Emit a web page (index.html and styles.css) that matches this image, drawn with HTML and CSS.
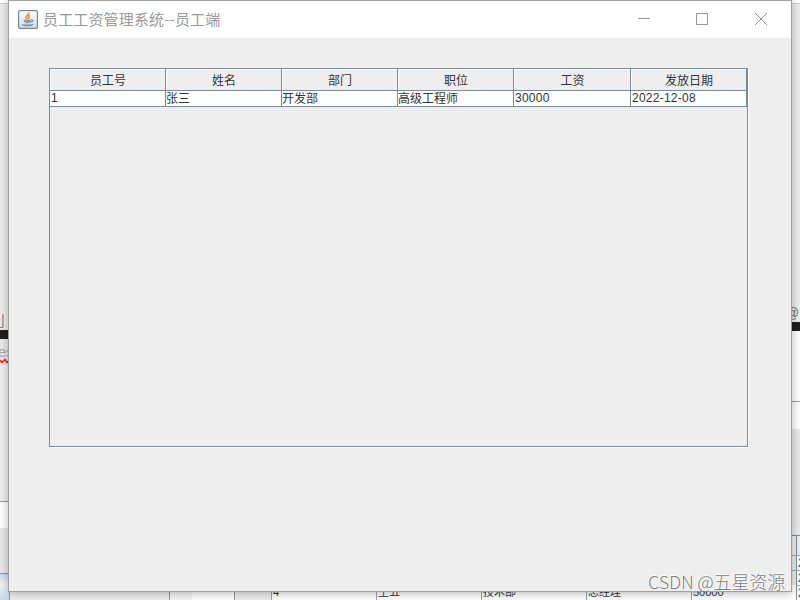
FILE: index.html
```
<!DOCTYPE html>
<html lang="zh-CN">
<head>
  <meta charset="utf-8">
  <title>员工工资管理系统--员工端</title>
  <link rel="stylesheet" href="styles.css">
</head>
<body>
  <div class="desktop">
    <!-- windows lying behind the main one -->
    <div class="behind-left">
      <div class="b-top"></div>
      <div class="l-panel"><span class="l-letter">刂</span></div>
      <div class="b-dark"></div>
      <div class="l-editor"><span class="l-word">es</span>
        <svg class="squiggle" width="9" height="6" viewBox="0 0 9 6"><path d="M0 2L2 4.500L5 1.500L7 4.500L9 3" fill="none" stroke="#ff2020" stroke-width="1.600"/></svg>
      </div>
      <div class="l-white"></div>
      <div class="l-gray"></div>
      <div class="l-task"></div>
    </div>
    <div class="behind-right">
      <div class="b-top"></div>
      <div class="r-panel"><span class="r-at">@</span></div>
      <div class="b-dark"></div>
      <div class="r-white"></div>
      <div class="r-white2"></div>
      <div class="r-gray"></div>
      <div class="r-head"></div>
      <div class="r-cell">2</div>
      <div class="r-cell">2</div>
      <div class="r-cell last">2</div>
    </div>
    <div class="behind-bottom">
      <div class="s1"></div>
      <div class="s2"></div>
      <div class="s3"></div>
      <div class="s4"></div>
      <div class="cell"><span>4</span></div>
      <div class="cell"><span>王五</span></div>
      <div class="cell"><span>技术部</span></div>
      <div class="cell"><span>总经理</span></div>
      <div class="cell"><span>50000</span></div>
    </div>

    <div class="window">
      <div class="titlebar">
        <svg class="java" width="20" height="19" viewBox="0 0 20 19">
          <defs>
            <linearGradient id="tile" x1="0" y1="0" x2="0" y2="1">
              <stop offset="0" stop-color="#ffffff"/>
              <stop offset="1" stop-color="#d3dbe2"/>
            </linearGradient>
          </defs>
          <rect x=".6" y=".6" width="18.8" height="17.8" rx="1.5" fill="url(#tile)" stroke="#71899b" stroke-width="1.2"/>
          <path d="M10.8 2.6C11.5 5 7.6 5.700 8 7.400C8.200 8.300 9 8.600 9.200 9.300M12 5.200C9.500 6.200 11.700 7.200 10.400 9" fill="none" stroke="#ea8f45" stroke-width="1.700"/>
          <path d="M5.500 9.800H13C13 12 12 13.100 9.500 13.100C7 13.100 6 12 5.500 9.800Z" fill="#8199aa"/>
          <path d="M13 9.800C15.800 9.300 15.300 11.900 12.400 12.200M4 14.400C6 16.300 13 16.200 15 14.300" fill="none" stroke="#6f8ba0" stroke-width="1.200"/>
          <path d="M6 14.200H12.500" stroke="#8ca1b0"/>
        </svg>
        <span class="title">员工工资管理系统--员工端</span>
        <div class="controls">
          <svg width="12" height="12"><path d="M0 5.500H12" stroke="#999"/></svg>
          <svg width="12" height="12"><rect x=".5" y=".5" width="11" height="11" fill="none" stroke="#999"/></svg>
          <svg class="close" width="12" height="12"><path d="M0 0L12 12M12 0L0 12" stroke="#8d8d8d"/></svg>
        </div>
      </div>

      <div class="content">
        <div class="scroll">
          <div class="row head">
            <div>员工号</div>
            <div>姓名</div>
            <div>部门</div>
            <div>职位</div>
            <div>工资</div>
            <div>发放日期</div>
          </div>
          <div class="row data">
            <div class="num">1</div>
            <div>张三</div>
            <div>开发部</div>
            <div>高级工程师</div>
            <div class="num">30000</div>
            <div class="num">2022-12-08</div>
          </div>
        </div>
      </div>
    </div>

    <div class="watermark">CSDN @五星资源</div>
  </div>
</body>
</html>
```
FILE: styles.css
```
* {
  box-sizing: border-box;
}

body {
  margin: 0;
  font-family: "Liberation Sans", "Noto Sans CJK SC", sans-serif;
}

.desktop {
  position: relative;
  width: 800px;
  height: 600px;
  overflow: hidden;
  background: #e4e4e4;
}

/* main window */
.window {
  position: absolute;
  left: 8px;
  top: 0;
  width: 784px;
  height: 592px;
  display: flex;
  flex-direction: column;
  border: 1px solid #a0a0a0;
  background: #eee;
  box-shadow: 0 1px 9px rgba(0, 0, 0, 0.3);
}

.titlebar {
  display: flex;
  align-items: center;
  height: 37px;
  padding: 0 24px 1px 9px;
  background: #fff;
}

.java {
  margin-right: 5px;
}

.title {
  font-family: "Noto Sans CJK SC", sans-serif;
  font-weight: 400;
  font-size: 15px;
  line-height: 20px;
  letter-spacing: 0.15px;
  color: #999;
}

.controls {
  display: flex;
  gap: 46px;
  margin-left: auto;
}

.controls svg {
  display: block;
}

.controls .close {
  margin-left: 1px;
}

.content {
  flex: 1;
  padding: 30px 42px 144px 40px;
}

.scroll {
  width: 699px;
  height: 379px;
  border: 1px solid #7a8a99;
  box-shadow: 1px 1px 0 #fff;
}

.row {
  display: grid;
  grid-template-columns: 116px 116px 116px 116px 117px 116px;
  font-size: 12px;
  color: #333;
}

.row div {
  border-right: 1px solid #7a8a99;
  border-bottom: 1px solid #7a8a99;
  white-space: nowrap;
}

.head div {
  height: 22px;
  padding: 2px 0 0 1px;
  line-height: 20px;
  text-align: center;
  box-shadow: inset 1px 1px 0 #fff;
}

.data div {
  height: 16px;
  line-height: 16px;
  background: #fff;
}

.data .num {
  padding-left: 1px;
  line-height: 14px;
  letter-spacing: 0.25px;
}

.watermark {
  position: absolute;
  right: 15px;
  bottom: 7px;
  font-family: "Noto Sans CJK SC", sans-serif;
  font-weight: 300;
  font-size: 18px;
  line-height: 24px;
  letter-spacing: -0.15px;
  color: #808080;
  text-shadow: -1px -1px 0 #fff;
  white-space: nowrap;
}

/* left strip */
.behind-left {
  position: absolute;
  left: 0;
  top: 0;
  width: 10px;
  height: 600px;
  display: flex;
  flex-direction: column;
}

.b-top {
  height: 4px;
  background: #fff;
  border-bottom: 1px solid #d0d0d0;
}

.b-dark {
  height: 9px;
  background: #202020;
}

.l-panel {
  height: 326px;
  padding-top: 308px;
  background: #eee;
  font-size: 14px;
  line-height: 18px;
  color: #777;
  overflow: hidden;
}

.l-letter {
  display: block;
  margin-left: -9px;
}

.l-editor {
  height: 163px;
  padding-top: 5px;
  background: linear-gradient(#eaeaea 26px, #f0f0f0 26px);
  border-bottom: 1px solid #999;
  overflow: hidden;
}

.l-word {
  display: block;
  margin-left: -2px;
  font-size: 15px;
  line-height: 16px;
  color: #aaa;
}

.squiggle {
  display: block;
  margin-top: -2px;
}

.l-white {
  height: 26px;
  background: #fff;
}

.l-gray {
  height: 46px;
  background: #eaeaea;
  border-bottom: 1px solid #8c98a5;
}

.l-task {
  height: 26px;
  border-right: 1px solid #8c98a5;
  background: linear-gradient(#cbdcec, #f4f7fa 40%, #c5d9eb);
}

/* right strip */
.behind-right {
  position: absolute;
  left: 791px;
  top: 0;
  width: 9px;
  height: 600px;
  display: flex;
  flex-direction: column;
}

.r-panel {
  height: 318px;
  padding-top: 301px;
  background: #eee;
  font-size: 14px;
  line-height: 16px;
  color: #777;
  overflow: hidden;
}

.r-at {
  display: block;
  margin-left: -6px;
}

.r-white {
  height: 71px;
  background: #fff;
  border-bottom: 1px solid #999;
}

.r-white2 {
  height: 27px;
  background: #fff;
}

.r-gray {
  height: 108px;
  background: #eaeaea;
  border-bottom: 1px solid #7a8a99;
}

.r-head,
.r-cell {
  width: 9px;
  border-bottom: 1px solid #9aa5b0;
  background: linear-gradient(90deg, #eee 5px, #7a8a99 5px, #7a8a99 6px, #fff 6px);
}

.r-head {
  height: 20px;
  background: linear-gradient(90deg, #eee 5px, #7a8a99 5px, #7a8a99 6px, #eee 6px);
}

.r-cell {
  height: 15px;
  padding-left: 7px;
  font-size: 12px;
  line-height: 14px;
  color: #704830;
  overflow: hidden;
}

.last {
  height: 14px;
  border-bottom: 0;
}

/* bottom strip */
.behind-bottom {
  position: absolute;
  left: 10px;
  top: 585px;
  width: 786px;
  height: 15px;
  display: flex;
  background: #fff;
}

.s1 {
  width: 160px;
  background: #eee;
  border-right: 1px solid #999;
}

.s2 {
  width: 22px;
  background: #f4f4f4;
}

.s3 {
  width: 43px;
  border-right: 1px solid #999;
}

.s4 {
  width: 36px;
  background: #eee;
}

.cell {
  width: 105px;
  padding-left: 1px;
  border-left: 1px solid #9aa5b0;
  font-size: 11px;
  line-height: 15px;
  color: #333;
  overflow: hidden;
  white-space: nowrap;
}
```
